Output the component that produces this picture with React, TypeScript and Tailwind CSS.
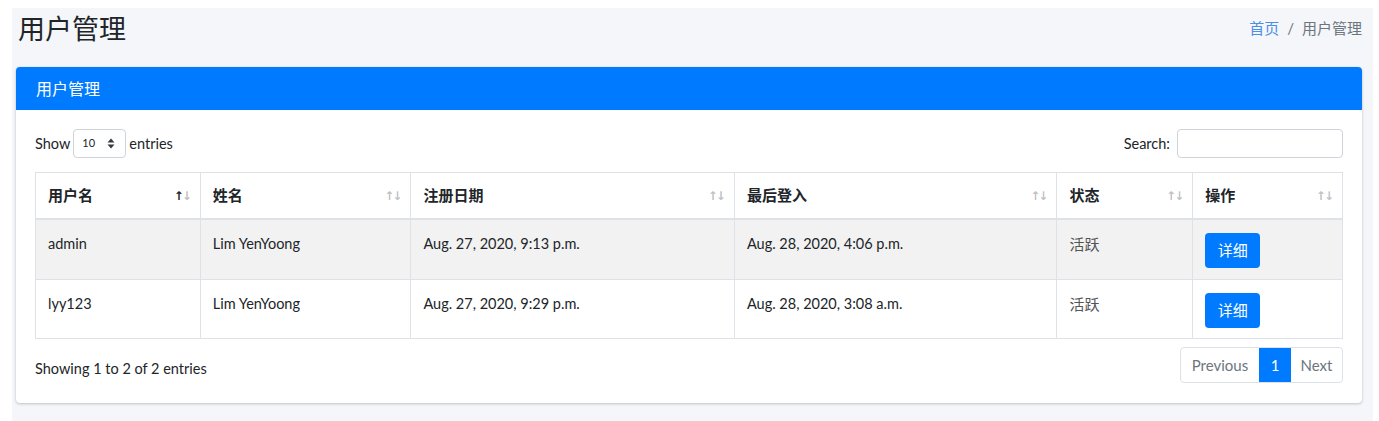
import React from "react";

const font = 'Lato, "Noto Sans CJK SC", sans-serif';

function SortIcon({ active }: { active?: boolean }) {
  return (
    <span className="flex items-center text-[12px] leading-none select-none" style={{ fontFamily: '"DejaVu Sans", sans-serif' }}>
      <span className={active ? "text-[#212529]" : "text-[#212529]/30"}>↑</span>
      <span className="text-[#212529]/30 -ml-[2px]">↓</span>
    </span>
  );
}

const cols = [
  { label: "用户名", w: "w-[164px]", active: true },
  { label: "姓名", w: "w-[211px]" },
  { label: "注册日期", w: "w-[324px]" },
  { label: "最后登入", w: "w-[323px]" },
  { label: "状态", w: "w-[136px]" },
  { label: "操作", w: "w-[150px]" },
];

const rows = [
  ["admin", "Lim YenYoong", "Aug. 27, 2020, 9:13 p.m.", "Aug. 28, 2020, 4:06 p.m.", "活跃"],
  ["lyy123", "Lim YenYoong", "Aug. 27, 2020, 9:29 p.m.", "Aug. 28, 2020, 3:08 a.m.", "活跃"],
];

export default function App() {
  return (
    <div className="bg-white w-[1379px] h-[421px] pl-[12px] pt-[8px] pr-[6px] text-[#212529]" style={{ fontFamily: font }}>
      <div className="bg-[#f4f6f9] h-[413px] pl-[4px] pr-[11px]">
        <div className="flex items-center justify-between h-[40px] pt-[0px]">
          <h1 className="text-[27px] leading-none pl-[2px] font-normal text-[#212529]">用户管理</h1>
          <div className="flex items-center text-[15px]">
            <span className="text-[#4b8fe8]">首页</span>
            <span className="text-[#6c757d] px-[8px]">/</span>
            <span className="text-[#6c757d]">用户管理</span>
          </div>
        </div>
        <div className="mt-[19px] bg-white rounded-[4px] shadow-[0_0_1px_rgba(0,0,0,0.13),0_1px_3px_rgba(0,0,0,0.2)] h-[336px]">
          <div className="bg-[#007bff] h-[43px] rounded-t-[4px] flex items-center px-[20px] text-white text-[16px]">
            用户管理
          </div>
          <div className="px-[19px] pt-[19px]">
            <div className="flex items-center justify-between h-[29px] text-[14.5px]">
              <div className="flex items-center">
                <span>Show</span>
                <div className="mx-[3px] w-[53px] h-[29px] border border-[#ced4da] rounded-[4px] flex items-center justify-between pl-[8px] pr-[10px] text-[11px]">
                  <span>10</span>
                  <svg width="8" height="11" viewBox="0 0 8 11">
                    <path d="M4 0.5 L7.5 4.5 H0.5 Z" fill="#343a40" />
                    <path d="M4 10.5 L7.5 6.5 H0.5 Z" fill="#343a40" />
                  </svg>
                </div>
                <span>entries</span>
              </div>
              <div className="flex items-center">
                <span className="mr-[7px]">Search:</span>
                <div className="w-[166px] h-[29px] border border-[#ced4da] rounded-[4px] bg-white" />
              </div>
            </div>
            <div className="mt-[14px] border border-[#dee2e6] w-[1308px]">
              <div className="flex border-b-2 border-[#dee2e6] h-[47px]">
                {cols.map((c, i) => (
                  <div
                    key={i}
                    className={`${c.w} flex items-center justify-between pl-[12px] pr-[8px] font-bold text-[15px] ${i > 0 ? "border-l border-[#dee2e6]" : ""}`}
                  >
                    <span>{c.label}</span>
                    <SortIcon active={c.active} />
                  </div>
                ))}
              </div>
              {rows.map((r, ri) => (
                <div key={ri} className={`flex h-[59px] text-[14.5px] ${ri === 0 ? "bg-[#f2f2f2]" : "bg-white border-t border-[#dee2e6]"}`}>
                  {r.map((v, ci) => (
                    <div
                      key={ci}
                      className={`${cols[ci].w} pl-[12px] pt-[12px] leading-[24px] ${ci > 0 ? "border-l border-[#dee2e6]" : ""} ${ci === 4 ? "text-[#555] text-[15px]" : ""}`}
                    >
                      {v}
                    </div>
                  ))}
                  <div className="w-[150px] border-l border-[#dee2e6] pl-[12px] pt-[13px]">
                    <button className="w-[55px] h-[35px] bg-[#007bff] text-white rounded-[4px] text-[15px]">详细</button>
                  </div>
                </div>
              ))}
            </div>
            <div className="flex items-center justify-between mt-[8px]">
              <span className="text-[14.5px] pt-[8px]">Showing 1 to 2 of 2 entries</span>
              <div className="flex h-[36px] border border-[#dee2e6] rounded-[4px] text-[15px] overflow-hidden">
                <div className="w-[78px] flex items-center justify-center text-[#6c757d]">Previous</div>
                <div className="w-[32px] flex items-center justify-center bg-[#007bff] text-white">1</div>
                <div className="w-[51px] flex items-center justify-center text-[#6c757d]">Next</div>
              </div>
            </div>
          </div>
        </div>
      </div>
    </div>
  );
}
